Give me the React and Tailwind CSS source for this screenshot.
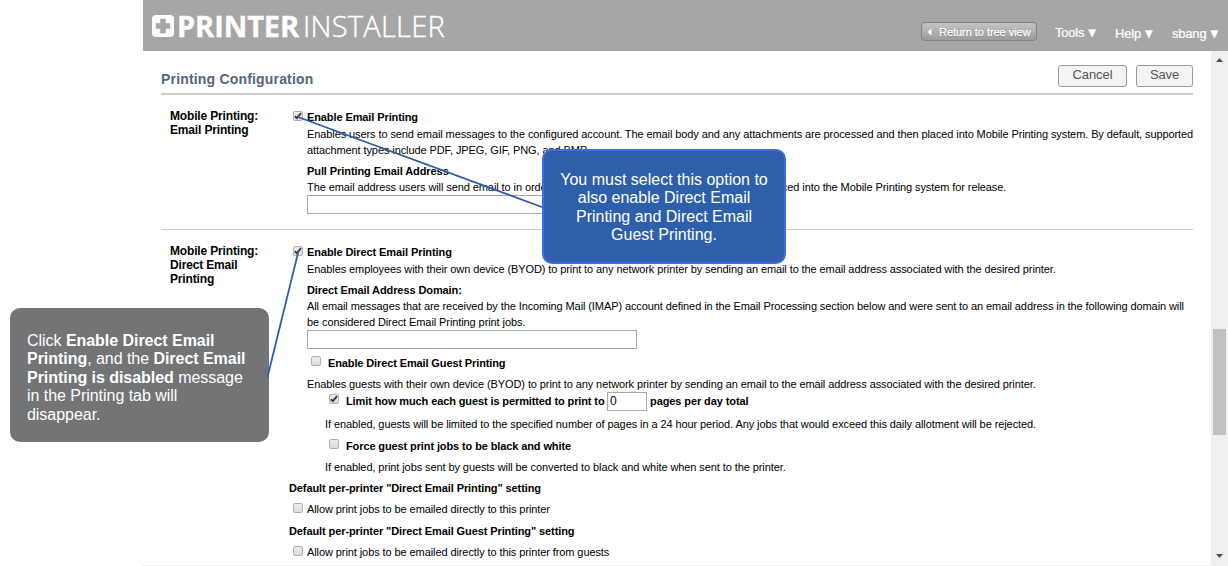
import React from "react";

function Check({ checked, className = "" }) {
  return (
    <span
      className={`flex h-[10px] w-[10px] shrink-0 items-center justify-center rounded-[2px] border border-[#b0b0b0] bg-linear-to-b from-[#ececec] to-[#dcdcdc] ${className}`}
    >
      {checked && (
        <svg width="8" height="8" viewBox="0 0 8 8" className="shrink-0 overflow-visible">
          <path d="M0.9 4.3 L2.9 6.2 L7 1.1" fill="none" stroke="#3c3c3c" strokeWidth="1.9" />
        </svg>
      )}
    </span>
  );
}

function Text({ className = "", children }) {
  return <div className={`h-4 whitespace-nowrap leading-4 ${className}`}>{children}</div>;
}

function MenuItem({ label, className = "" }) {
  return (
    <div className={`flex items-center text-[13px] leading-4 tracking-[-0.2px] text-white [-webkit-text-stroke:0.2px_white] ${className}`}>
      <span>{label}</span>
      <span className="ml-[4px] w-2 font-['DejaVu_Sans'] text-[10px] tracking-normal">▼</span>
    </div>
  );
}

function Header() {
  return (
    <header className="flex h-[51px] shrink-0 bg-[#a6a6a6]">
      <div className="flex pl-[9px]">
        <svg width="22" height="22" viewBox="0 0 22 22" className="mt-[15px]">
          <rect width="22" height="22" rx="4" fill="#fff" />
          <path d="M8.2 3.8h5.6v4.4h4.4v5.6h-4.4v4.4H8.2v-4.4H3.8V8.2h4.4z" fill="#a6a6a6" />
        </svg>
        <div className="ml-[3px] mt-[6px] flex h-10 whitespace-nowrap font-['Open_Sans'] text-[29px] leading-10 text-white">
          <span className="w-[126px] font-bold tracking-[-0.1px] [-webkit-text-stroke:0.4px_white]">PRINTER</span>
          <span className="font-light tracking-[0.25px] [-webkit-text-stroke:0.4px_white]">INSTALLER</span>
        </div>
      </div>
      <div className="ml-auto flex">
        <div className="mt-[22px] flex h-[19px] w-[116px] items-center rounded-[4px] border border-[#808080] bg-linear-to-b from-[#c4c4c4] to-[#9c9c9c] pl-[5px] text-[11px] text-white [text-shadow:0_1px_1px_#777]">
          <svg width="5" height="8" viewBox="0 0 5 8">
            <path d="M4.5 0.5v7L0.5 4z" fill="#fff" />
          </svg>
          <span className="ml-[7px] mt-px whitespace-nowrap leading-4 tracking-[-0.04px] [-webkit-text-stroke:0.25px_white]">Return to tree view</span>
        </div>
        <MenuItem label="Tools" className="ml-[18px] mt-[25px] h-4 w-[60px]" />
        <MenuItem label="Help" className="mt-[26px] h-4 w-[57px]" />
        <MenuItem label="sbang" className="mt-[26px] h-4 w-[56px]" />
      </div>
    </header>
  );
}

function Button({ className = "", children }) {
  return (
    <button className={`flex h-[22px] justify-center rounded-[3px] border border-[#9a9a9a] bg-[#f4f4f4] text-[13px] leading-[18px] tracking-[-0.1px] text-[#555] ${className}`}>
      {children}
    </button>
  );
}

function EmailSection() {
  return (
    <section className="flex h-[121px] border-b border-[#ccc] pl-[9px]">
      <div className="w-[119px] shrink-0 text-[12px] font-bold leading-[14px] tracking-[-0.16px]">
        <div>Mobile Printing:</div>
        <div>Email Printing</div>
      </div>
      <div>
        <div className="flex pl-1">
          <Check checked className="mt-[2px]" />
          <Text className="ml-1 font-bold tracking-[-0.1px]">Enable Email Printing</Text>
        </div>
        <div className="mt-px pl-[18px]">
          <Text className="tracking-[-0.094px]">Enables users to send email messages to the configured account. The email body and any attachments are processed and then placed into Mobile Printing system. By default, supported</Text>
          <Text className="tracking-[-0.09px]">attachment types include PDF, JPEG, GIF, PNG, and BMP.</Text>
          <Text className="mt-[5px] font-bold tracking-[-0.08px]">Pull Printing Email Address</Text>
          <Text className="tracking-[-0.088px]">The email address users will send email to in order to have their email body and all attachments placed into the Mobile Printing system for release.</Text>
          <div className="h-[19px] w-[330px] border border-[#a9a9a9] bg-white" />
        </div>
      </div>
    </section>
  );
}

function DirectSection() {
  return (
    <section className="flex pl-[9px] pt-[14px]">
      <div className="w-[119px] shrink-0 text-[12px] font-bold leading-[14px] tracking-[-0.16px]">
        <div>Mobile Printing:</div>
        <div>Direct Email</div>
        <div>Printing</div>
      </div>
      <div>
        <div className="flex pl-1">
          <Check checked className="mt-[2px]" />
          <Text className="ml-1 font-bold tracking-[-0.09px]">Enable Direct Email Printing</Text>
        </div>
        <div className="mt-px pl-[18px]">
          <Text className="tracking-[-0.096px]">Enables employees with their own device (BYOD) to print to any network printer by sending an email to the email address associated with the desired printer.</Text>
          <Text className="mt-[5px] font-bold tracking-[-0.09px]">Direct Email Address Domain:</Text>
          <Text className="tracking-[-0.094px]">All email messages that are received by the Incoming Mail (IMAP) account defined in the Email Processing section below and were sent to an email address in the following domain will</Text>
          <Text className="tracking-[-0.09px]">be considered Direct Email Printing print jobs.</Text>
          <div className="h-[19px] w-[330px] border border-[#a9a9a9] bg-white" />
        </div>
        <div className="mt-[6px] flex pl-[22px]">
          <Check className="mt-px" />
          <Text className="ml-[7px] font-bold tracking-[-0.12px]">Enable Direct Email Guest Printing</Text>
        </div>
        <Text className="mt-[5px] pl-[18px] tracking-[-0.093px]">Enables guests with their own device (BYOD) to print to any network printer by sending an email to the email address associated with the desired printer.</Text>
        <div className="mt-px flex h-4 pl-10">
          <Check checked className="mt-px" />
          <Text className="ml-[7px] w-[261px] font-bold tracking-[-0.11px]">Limit how much each guest is permitted to print to</Text>
          <div className="-mt-px h-[19px] w-10 border border-[#a9a9a9] bg-white pl-[2px] text-[12px] leading-[17px]">0</div>
          <Text className="ml-[3px] font-bold tracking-[-0.09px]">pages per day total</Text>
        </div>
        <Text className="mt-[7px] pl-9 tracking-[-0.088px]">If enabled, guests will be limited to the specified number of pages in a 24 hour period. Any jobs that would exceed this daily allotment will be rejected.</Text>
        <div className="mt-[6px] flex pl-10">
          <Check className="mt-px" />
          <Text className="ml-[7px] font-bold tracking-[-0.11px]">Force guest print jobs to be black and white</Text>
        </div>
        <Text className="mt-[5px] pl-9 tracking-[-0.09px]">If enabled, print jobs sent by guests will be converted to black and white when sent to the printer.</Text>
        <Text className="mt-[5px] font-bold tracking-[-0.094px]">Default per-printer "Direct Email Printing" setting</Text>
        <div className="mt-[5px] flex pl-1">
          <Check className="mt-[2px]" />
          <Text className="ml-1 tracking-[-0.085px]">Allow print jobs to be emailed directly to this printer</Text>
        </div>
        <Text className="mt-[6px] font-bold tracking-[-0.097px]">Default per-printer "Direct Email Guest Printing" setting</Text>
        <div className="mt-[5px] flex pl-1">
          <Check className="mt-[2px]" />
          <Text className="ml-1 tracking-[-0.088px]">Allow print jobs to be emailed directly to this printer from guests</Text>
        </div>
      </div>
    </section>
  );
}

function Scrollbar() {
  return (
    <div className="flex w-[17px] shrink-0 flex-col items-center bg-[#f0f0f0]">
      <svg width="7" height="4" viewBox="0 0 7 4" className="mt-[7px]">
        <path d="M0 4L3.5 0L7 4z" fill="#505050" />
      </svg>
      <div className="mt-[267px] h-[106px] w-[13px] bg-[#c1c1c1]" />
      <svg width="7" height="4" viewBox="0 0 7 4" className="mb-[7px] mt-auto">
        <path d="M0 0L3.5 4L7 0z" fill="#505050" />
      </svg>
    </div>
  );
}

export default function App() {
  return (
    <div className="relative h-[566px] w-[1228px] overflow-hidden bg-white font-['Liberation_Sans',Arial,sans-serif] text-[11px] text-black">
      <div className="ml-[143px] flex h-full flex-col border-b border-[#f0f0f0]">
        <Header />
        <div className="flex min-h-0 flex-1">
          <main className="w-[1068px] overflow-hidden pl-[18px] pr-[18px]">
            <div className="mb-[14px] flex h-11 border-b-2 border-[#ccc] pt-[14px]">
              <h1 className="mt-[6px] text-[14px] font-bold leading-4 tracking-[0.18px] text-[#54657e]">Printing Configuration</h1>
              <Button className="ml-auto w-[69px]">Cancel</Button>
              <Button className="ml-[9px] w-[57px]">Save</Button>
            </div>
            <EmailSection />
            <DirectSection />
          </main>
          <Scrollbar />
        </div>
      </div>

      <div className="absolute left-[10px] top-[308px] h-[134px] w-[259px] rounded-[10px] bg-[#727476] pl-[17px] pt-[24px] text-[16px] leading-[18.4px] tracking-[-0.04px] text-white">
        <div>Click <b>Enable Direct Email</b></div>
        <div><b>Printing</b>, and the <b>Direct Email</b></div>
        <div><b>Printing is disabled</b> message</div>
        <div>in the Printing tab will</div>
        <div>disappear.</div>
      </div>
      <svg width="1228" height="566" className="pointer-events-none absolute left-0 top-0">
        <path d="M298 117L543 207.500M298.500 251L267.500 377" stroke="#2e5fab" strokeWidth="1.8" fill="none" />
      </svg>
      <div className="absolute left-[542px] top-[149px] h-[115px] w-[244px] rounded-[10px] border-2 border-[#4169e1] bg-[#2e5fab] pt-[20px] text-center text-[16px] leading-[18.4px] text-white">
        <div>You must select this option to</div>
        <div>also enable Direct Email</div>
        <div>Printing and Direct Email</div>
        <div>Guest Printing.</div>
      </div>
    </div>
  );
}
